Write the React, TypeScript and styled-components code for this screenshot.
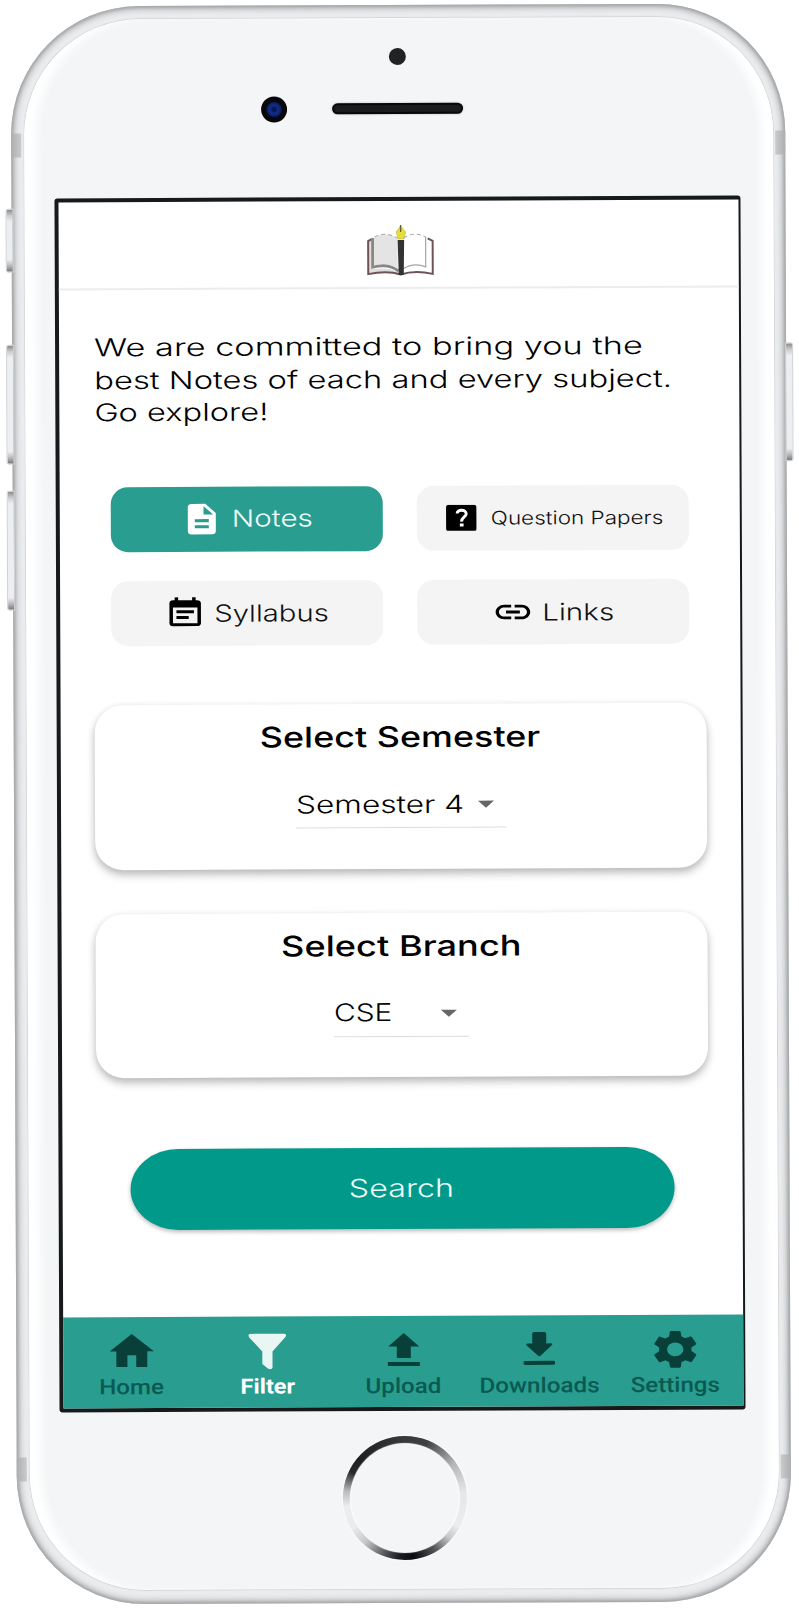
import React from "react";
import styled, { createGlobalStyle, css } from "styled-components";
import { MdDescription, MdEventNote, MdHome, MdLink, MdSettings } from "react-icons/md";

const GlobalStyle = createGlobalStyle`
  * { box-sizing: border-box; }
  html, body { margin: 0; padding: 0; background: #fff; overflow: hidden; }
`;

const Stage = styled.main`
  width: 799px;
  height: 1610px;
  padding: 5px 0 0 14px;
  overflow: hidden;
  background: #fff;
  font-family: Inter, "Open Sans", sans-serif;
`;

const Phone = styled.div`
  position: relative;
  width: 774px;
  height: 1598px;
  padding: 13px 12px 14px 13px;
  border-radius: 128px;
  background: #ebecee;
  box-shadow: inset 0 0 3px 2px #a3a5a7, inset 0 0 5px 5px #c9cbcd;
  transform: rotate(-0.24deg);
  transform-origin: 386px 800px;
`;

const SideKey = styled.i<{ $top: number; $height: number; $right?: boolean }>`
  position: absolute;
  top: ${(p) => p.$top}px;
  ${(p) => (p.$right ? "right: -7px" : "left: -6px")};
  width: 8px;
  height: ${(p) => p.$height}px;
  border-radius: ${(p) => (p.$right ? "0 3px 3px 0" : "3px 0 0 3px")};
  background: linear-gradient(#888 0, #ccc 6px, #eceef0 12px, #eceef0 calc(100% - 12px), #bbb calc(100% - 6px), #777 100%);
  border: 1px solid #cfd1d4;
  z-index: -1;
`;

const Antenna = styled.i<{ $top: number; $right?: boolean }>`
  position: absolute;
  top: ${(p) => p.$top}px;
  ${(p) => (p.$right ? "right: 0" : "left: 0")};
  width: 10px;
  height: 24px;
  background: linear-gradient(${(p) => (p.$right ? "270deg" : "90deg")}, #acaeaf, #c9cbcc);
`;

const Glass = styled.div`
  height: 100%;
  padding-left: 30px;
  border-radius: 116px;
  background: #f3f5f7;
  box-shadow: 0 0 1px 0.5px #c4c6c9, inset 16px 0 10px -4px #fff, inset -16px 0 8px -4px #fff;
`;

const Earpiece = styled.header`
  height: 179px;
  display: grid;
  grid-template-columns: 26px 131px;
  grid-template-rows: 17px 26px;
  column-gap: 44.5px;
  row-gap: 31px;
  align-items: center;
  align-content: start;
  padding: 30px 0 0 207px;
`;

const Proximity = styled.span`
  grid-column: 1 / 3;
  width: 17px;
  height: 17px;
  margin-left: 127.5px;
  border-radius: 50%;
  background: #222;
`;

const Camera = styled.span`
  width: 26px;
  height: 26px;
  border-radius: 50%;
  background: radial-gradient(circle, #071a55 0 2px, #12308a 4px, #0a1c66 7px, #07070c 8px);
`;

const Speaker = styled.span`
  height: 11px;
  margin-top: -2px;
  border-radius: 6px;
  background: #1b1b1b;
  border: 2px solid #080808;
  box-shadow: 0 0 2px #aaa;
`;

const Screen = styled.section`
  width: 686px;
  height: 1214px;
  display: flex;
  flex-direction: column;
  border: solid #161a1a;
  border-width: 4px 2px 4px 4px;
  border-radius: 3px;
  background: #fff;
`;

const AppBar = styled.div`
  height: 88px;
  flex: none;
  display: flex;
  justify-content: center;
  padding: 22.5px 0 0 4px;
  border-bottom: 2px solid #ececec;
`;

const Content = styled.div`
  flex: 1;
  min-height: 0;
  display: flex;
  flex-direction: column;
  padding: 41px 34px 0 34px;
`;

const Stretch = styled.span<{ $x: number; $left?: boolean }>`
  display: block;
  white-space: nowrap;
  transform: scaleX(${(p) => p.$x});
  transform-origin: ${(p) => (p.$left ? "left" : "center")} center;
`;

const Intro = styled.p`
  margin: 0 0 0 1px;
  height: 155.8px;
  font-size: 24.5px;
  font-weight: 330;
  line-height: 32.6px;
  color: #000;
`;

const Tiles = styled.div`
  display: grid;
  grid-template-columns: 272px 272px;
  gap: 29.5px 34.5px;
  padding-left: 16.5px;
  margin-bottom: 59px;
`;

const Tile = styled.button<{ $active?: boolean; $small?: boolean; $gap: number; $pad: number }>`
  height: 65px;
  display: flex;
  align-items: center;
  gap: ${(p) => p.$gap}px;
  padding: 0 0 1px ${(p) => p.$pad}px;
  border: 0;
  border-radius: 17px;
  background: ${(p) => (p.$active ? "#289d90" : "#f4f4f4")};
  color: ${(p) => (p.$active ? "#f2fffc" : "#111")};
  font: 330 ${(p) => (p.$small ? 18.5 : 23.5)}px Inter, sans-serif;
`;

const Glyph = styled.span<{ $w: number; $h: number; $dy?: number }>`
  flex: none;
  display: block;
  height: ${(p) => p.$h}px;
  transform: translateY(${(p) => p.$dy ?? 0}px);

  svg {
    display: block;
    width: ${(p) => p.$w}px;
    height: ${(p) => p.$h}px;
  }
`;

const TileGlyph = styled(Glyph)<{ $active?: boolean }>`
  color: ${(p) => (p.$active ? "#fff" : "#000")};
`;

const Card = styled.article`
  height: 164.4px;
  flex: none;
  display: flex;
  flex-direction: column;
  align-items: center;
  border-radius: 28px;
  background: #fff;
  box-shadow: 0 5px 8px rgba(0, 0, 0, 0.24), 0 1px 7px rgba(0, 0, 0, 0.08);
  & + & { margin-top: 44px; }
`;

const CardTitle = styled.h2`
  margin: 14px 0 0;
  padding-right: 1px;
  font-size: 28.5px;
  line-height: 38px;
  font-weight: 500;
  color: #000;
`;

const Select = styled.div<{ $width: number }>`
  width: ${(p) => p.$width}px;
  height: 47px;
  margin-top: 25px;
  margin-right: 1px;
  padding: 0 12px 1px 0;
  display: flex;
  align-items: center;
  justify-content: space-between;
  border-bottom: 1.5px solid #dedede;
  font-size: 24.5px;
  font-weight: 320;
  color: #000;
`;

const Caret = styled.i`
  width: 0;
  margin-top: 2px;
  border: solid transparent;
  border-width: 7.5px 8.5px 0;
  border-top-color: #666;
`;

const Search = styled.button`
  width: 543.5px;
  height: 81px;
  flex: none;
  margin: 70.5px 0 0 34px;
  padding-right: 7px;
  display: flex;
  align-items: center;
  justify-content: center;
  border: 0;
  border-radius: 48px / 40.5px;
  background: #00998a;
  box-shadow: 0 2px 4px rgba(0, 0, 0, 0.28);
  color: #effffc;
  font: 320 25px Inter, sans-serif;
`;

const NavBar = styled.nav`
  flex: none;
  height: 91px;
  display: grid;
  grid-template-columns: repeat(5, 1fr);
  background: #289d90;
`;

const NavItem = styled.a<{ $active?: boolean }>`
  display: flex;
  flex-direction: column;
  align-items: center;
  padding-top: 11px;
  font: 500 21px/24px Roboto, sans-serif;
  color: #0a5a52;
  svg { color: #083f38; }
  ${(p) => p.$active && css`
    color: #fff;
    font-weight: 700;
    svg { color: #e8f6f4; }
  `}
`;

const NavIcon = styled.span`
  height: 45px;
  margin-bottom: 1.5px;
  display: flex;
  align-items: center;
`;

const HomeButton = styled.div`
  width: 124px;
  height: 124px;
  margin: 25px 0 0 283px;
  padding: 8px;
  border-radius: 50%;
  background: conic-gradient(#38393b 0deg, #3f4042 22deg, #b5b6b8 55deg, #e6e7e9 85deg, #ededee 118deg, #c9c9cb 132deg, #55565a 150deg, #07080f 172deg, #1c1d22 186deg, #55565a 200deg, #c6c7c9 222deg, #ececee 240deg, #ededee 262deg, #b9babb 277deg, #29292b 296deg, #1f1f21 310deg, #38393b 360deg);
  box-shadow: 0 0 2px 1px #fafbfc;
  &::after {
    content: "";
    display: block;
    height: 100%;
    border-radius: 50%;
    background: #f3f5f7;
    box-shadow: 0 0 1px 1px #fff;
  }
`;

const BookLogo = () => (
  <svg width="68" height="52" viewBox="0 0 68 52">
    <path d="M1 17 5 15V45Q22 43 33 49L34 51Q20 46 1 50Z" fill="#e3dcdc" />
    <path d="M67 17 63 15V45Q46 43 35 49L34 51Q48 46 67 50Z" fill="#fff" />
    <path d="M5 15 1.500 17V50Q20 46 34 50.500Q48 46 66 50V17L61 14.500" fill="none" stroke="#6c5456" strokeWidth="2" />
    <path d="M6 14V43Q22 39 32 47" fill="none" stroke="#888" strokeWidth="3" />
    <path d="M7.500 13Q18 7 31 14V45Q20 37 7.500 41.500Z" fill="#e4e4e4" />
    <path d="M8 13Q18 7 31 14M37 14Q47 7 59 13" fill="none" stroke="#aaa" strokeWidth="1" strokeDasharray="4 3" />
    <path d="M59 13V43Q47 38 36 45" fill="none" stroke="#a5a5a5" strokeWidth="1.2" />
    <path d="M31 16H37.500L37 51H32Z" fill="#333" />
    <path d="M34 2 39 8 37 15H31.500L29.500 8Z" fill="#e4df3c" stroke="#b5b040" strokeWidth=".6" />
    <path d="M34 1V8" stroke="#665f25" strokeWidth="1.3" />
  </svg>
);

const QuestionIcon = () => (
  <svg viewBox="0 0 31 27">
    <rect width="31" height="27" rx="2.600" fill="#000" />
    <path d="M11.300 9C11.300 4.500 20.500 4.500 20.500 9.200C20.500 12.500 15.800 12.600 15.800 17.200" fill="none" stroke="#fff" strokeWidth="3" />
    <rect x="14" y="19" width="3.800" height="3.200" fill="#fff" />
  </svg>
);

const FilterIcon = () => (
  <svg viewBox="0 0 38 36" fill="currentColor">
    <path d="M2 0H36Q39 .7 37.200 3.500L24.200 18V34Q23.600 36 21.500 35.600L19.500 35 14 30.500V18L.8 3.500Q-1 .7 2 0Z" />
  </svg>
);

const UploadIcon = () => (
  <svg viewBox="0 0 33 35" fill="currentColor">
    <path d="M16.500 1 32 14.500H23.500V26H9.500V14.500H1Z" />
    <rect x="0.500" y="30" width="32" height="4" />
  </svg>
);

const DownloadIcon = () => (
  <svg viewBox="0 0 32 34" fill="currentColor">
    <path d="M11 .5H21Q23 .5 23 2.500V12H27.500Q30 12.500 28.500 14L17.500 24Q16 25.500 14.500 24L3.500 14Q2 12.500 4.500 12H9V2.500Q9 .5 11 .5Z" />
    <rect x="0" y="29.500" width="32" height="4" rx="2" />
  </svg>
);

const intro: [string, number][] = [
  ["We are committed to bring you the", 1.4],
  ["best Notes of each and every subject.", 1.336],
  ["Go explore!", 1.33],
];

const fill = { preserveAspectRatio: "none" };

const tiles = [
  { label: "Notes", icon: <MdDescription {...fill} />, w: 42, h: 36.6, pad: 70, gap: 9, x: 1.26, active: true },
  { label: "Question Papers", icon: <QuestionIcon />, w: 31, h: 26.5, pad: 29, gap: 14, x: 1.215, small: true },
  { label: "Syllabus", icon: <MdEventNote {...fill} />, w: 42, h: 34.6, pad: 53.5, gap: 8, x: 1.245 },
  { label: "Links", icon: <MdLink {...fill} />, w: 41.5, h: 35, pad: 74.5, gap: 8.5, x: 1.26 },
];

const tabs = [
  { label: "Home", icon: <MdHome {...fill} />, w: 53, h: 46.6, dy: 1, x: 1.15 },
  { label: "Filter", icon: <FilterIcon />, w: 38, h: 36, dy: 1, x: 1.12, active: true },
  { label: "Upload", icon: <UploadIcon />, w: 33, h: 35, dy: 0, x: 1.15 },
  { label: "Downloads", icon: <DownloadIcon />, w: 32, h: 34, dy: -1, x: 1.155 },
  { label: "Settings", icon: <MdSettings {...fill} />, w: 54, h: 46, dy: 0.5, x: 1.15 },
];

export default function App() {
  return (
    <>
      <GlobalStyle />
      <Stage>
        <Phone>
          <SideKey $top={202} $height={64} />
          <SideKey $top={338} $height={120} />
          <SideKey $top={484} $height={120} />
          <SideKey $top={339} $height={119} $right />
          <Antenna $top={127} />
          <Antenna $top={127} $right />
          <Antenna $top={1451} />
          <Antenna $top={1451} $right />
          <Glass>
            <Earpiece>
              <Proximity />
              <Camera />
              <Speaker />
            </Earpiece>
            <Screen>
              <AppBar><BookLogo /></AppBar>
              <Content>
                <Intro>
                  {intro.map(([line, x]) => <Stretch key={line} $x={x} $left>{line}</Stretch>)}
                </Intro>
                <Tiles>
                  {tiles.map((t) => (
                    <Tile key={t.label} $active={t.active} $small={t.small} $gap={t.gap} $pad={t.pad}>
                      <TileGlyph $active={t.active} $w={t.w} $h={t.h}>{t.icon}</TileGlyph>
                      <Stretch $x={t.x} $left>{t.label}</Stretch>
                    </Tile>
                  ))}
                </Tiles>
                <Card>
                  <CardTitle><Stretch $x={1.26}>Select Semester</Stretch></CardTitle>
                  <Select $width={210}><Stretch $x={1.29} $left>Semester 4</Stretch><Caret /></Select>
                </Card>
                <Card>
                  <CardTitle><Stretch $x={1.27}>Select Branch</Stretch></CardTitle>
                  <Select $width={135}><Stretch $x={1.22} $left>CSE</Stretch><Caret /></Select>
                </Card>
                <Search><Stretch $x={1.29}>Search</Stretch></Search>
              </Content>
              <NavBar>
                {tabs.map((t) => (
                  <NavItem key={t.label} $active={t.active}>
                    <NavIcon><Glyph $w={t.w} $h={t.h} $dy={t.dy}>{t.icon}</Glyph></NavIcon>
                    <Stretch $x={t.x}>{t.label}</Stretch>
                  </NavItem>
                ))}
              </NavBar>
            </Screen>
            <HomeButton />
          </Glass>
        </Phone>
      </Stage>
    </>
  );
}
